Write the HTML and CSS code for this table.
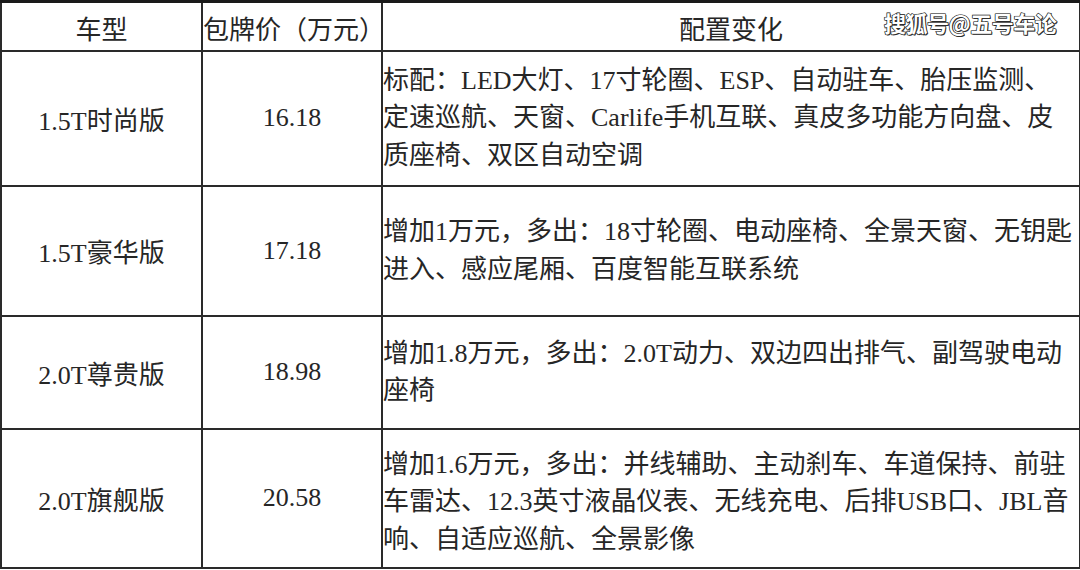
FILE: index.html
```html
<!DOCTYPE html>
<html lang="zh-CN">
<head>
<meta charset="utf-8">
<link rel="stylesheet" href="styles.css">
</head>
<body>
<div class="sheet">
  <table class="spec">
    <colgroup>
      <col class="c-model">
      <col class="c-price">
      <col class="c-conf">
    </colgroup>
    <thead>
      <tr class="r-head">
        <th>车型</th>
        <th>包牌价（万元）</th>
        <th>配置变化</th>
      </tr>
    </thead>
    <tbody>
      <tr class="r1">
        <td class="mid">1.5T时尚版</td>
        <td class="mid">16.18</td>
        <td class="conf">标配：LED大灯、17寸轮圈、ESP、自动驻车、胎压监测、<br>定速巡航、天窗、Carlife手机互联、真皮多功能方向盘、皮<br>质座椅、双区自动空调</td>
      </tr>
      <tr class="r2">
        <td class="mid">1.5T豪华版</td>
        <td class="mid">17.18</td>
        <td class="conf">增加1万元，多出：18寸轮圈、电动座椅、全景天窗、无钥匙<br>进入、感应尾厢、百度智能互联系统</td>
      </tr>
      <tr class="r3">
        <td class="mid">2.0T尊贵版</td>
        <td class="mid">18.98</td>
        <td class="conf">增加1.8万元，多出：2.0T动力、双边四出排气、副驾驶电动<br>座椅</td>
      </tr>
      <tr class="r4">
        <td class="mid">2.0T旗舰版</td>
        <td class="mid">20.58</td>
        <td class="conf">增加1.6万元，多出：并线辅助、主动刹车、车道保持、前驻<br>车雷达、12.3英寸液晶仪表、无线充电、后排USB口、JBL音<br>响、自适应巡航、全景影像</td>
      </tr>
    </tbody>
  </table>
  <div class="watermark">搜狐号@五号车论</div>
</div>
</body>
</html>
```

FILE: styles.css
```css
html, body {
  margin: 0;
  padding: 0;
  background: #ffffff;
}

.sheet {
  position: relative;
  width: 1080px;
  height: 570px;
  overflow: hidden;
}

.spec {
  border-collapse: collapse;
  width: 1079px;
  table-layout: fixed;
  font-family: "Liberation Serif", "Noto Sans CJK SC", serif;
  font-size: 26px;
  color: #262626;
  border-top: 3px solid #1a1a1a;
  border-left: 2px solid #1a1a1a;
  border-right: 2px solid #1a1a1a;
  border-bottom: 2px solid #1a1a1a;
}

.c-model { width: 201px; }
.c-price { width: 180px; }
.c-conf { width: 698px; }

.spec th,
.spec td {
  border: 2px solid #2a2a2a;
  padding: 0;
  font-weight: normal;
}

.spec th {
  text-align: center;
  vertical-align: middle;
  padding-top: 2px;
}

.r-head { height: 49px; }
.r1 { height: 135px; }
.r2 { height: 130px; }
.r3 { height: 113px; }
.r4 { height: 139px; }

.mid {
  text-align: center;
  vertical-align: middle;
}

.conf {
  text-align: left;
  vertical-align: middle;
  padding: 4px 0 0 4px;
  line-height: 37.5px;
  white-space: nowrap;
}

.r4 .conf {
  padding-top: 8px;
}

.watermark {
  position: absolute;
  top: 6px;
  left: 884px;
  font-family: "Noto Sans CJK SC", sans-serif;
  font-size: 22px;
  font-weight: 700;
  color: #ffffff;
  letter-spacing: -0.5px;
  -webkit-text-stroke: 1.2px #222222;
  paint-order: stroke fill;
  text-shadow: 0 0 1px #000, 1px 1px 0 #333;
}
```
